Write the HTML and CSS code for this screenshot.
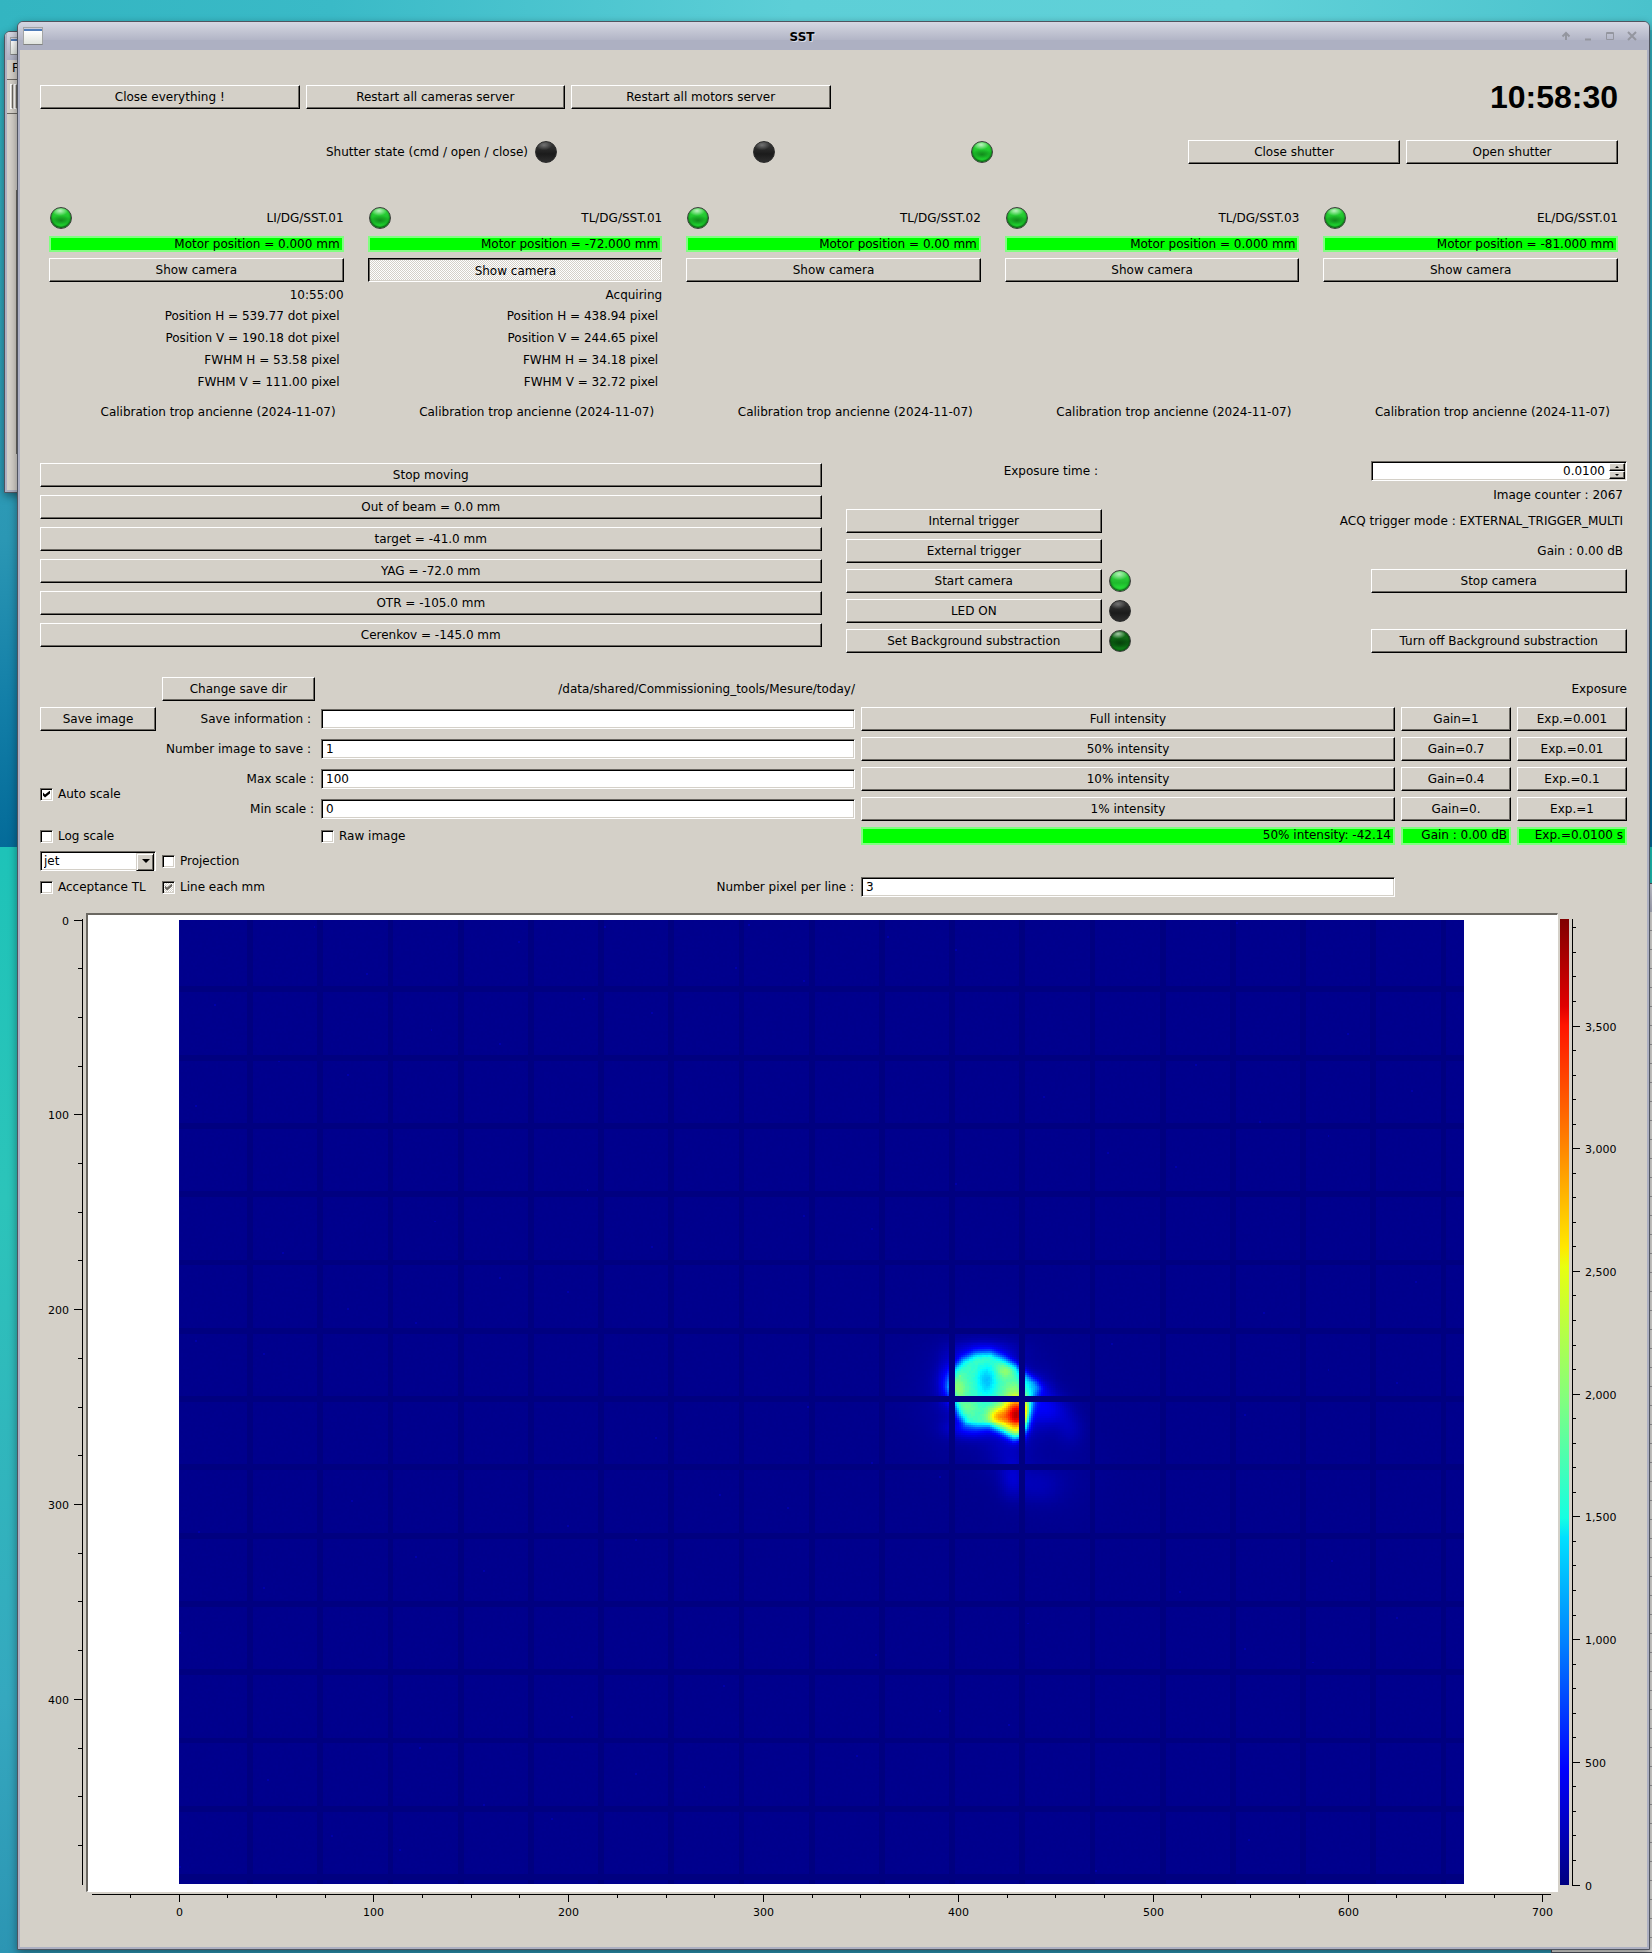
FILE: index.html
```html
<!DOCTYPE html>
<html lang="en">
<head>
<meta charset="utf-8">
<meta name="viewport" content="width=device-width, initial-scale=1">
<title>SST</title>
<link rel="stylesheet" href="styles.css">
</head>
<body>
<div class="back-window back-window-left" aria-hidden="true">
  <div class="back-title"><span class="window-icon"></span></div>
  <div class="back-menu">File</div>
  <div class="back-toolbar"><span class="grip"></span><span class="grip"></span></div>
  <div class="back-pane"></div>
</div>
<div class="back-window back-window-right" aria-hidden="true">
  <div class="back-title"></div>
  <div class="back-lines"></div>
</div>

<div class="window">
  <header class="titlebar">
    <span class="window-icon"></span>
    <h1 class="title">SST</h1>
    <div class="title-buttons">
      <button class="title-button" aria-label="Shade"><svg width="10" height="10" viewBox="0 0 10 10"><path d="M5 9V3M1.500 5.500L5 2L8.500 5.500" /></svg></button>
      <button class="title-button" aria-label="Minimize"><svg width="10" height="10" viewBox="0 0 10 10"><path d="M2 8.500H8" /></svg></button>
      <button class="title-button" aria-label="Maximize"><svg width="10" height="10" viewBox="0 0 10 10"><path class="thin" d="M1.500 1.500H8.500V8.500H1.500ZM1.500 2.500H8.500" /></svg></button>
      <button class="title-button" aria-label="Close"><svg width="10" height="10" viewBox="0 0 10 10"><path d="M1 1L9 9M9 1L1 9" /></svg></button>
    </div>
  </header>

  <main class="content">
    <section class="servers">
      <button class="btn">Close everything !</button>
      <button class="btn">Restart all cameras server</button>
      <button class="btn">Restart all motors server</button>
      <time class="clock">10:58:30</time>
    </section>

    <section class="shutter">
      <span class="shutter-label">Shutter state (cmd / open / close)</span>
      <span class="led led-off" role="img" aria-label="off"></span>
      <span class="led led-off" role="img" aria-label="off"></span>
      <span class="led led-on" role="img" aria-label="on"></span>
      <button class="btn">Close shutter</button>
      <button class="btn">Open shutter</button>
    </section>

    <section class="cameras">
      <article class="camera">
        <div class="camera-head"><span class="led led-on" role="img" aria-label="on"></span><span>LI/DG/SST.01</span></div>
        <div class="status-bar">Motor position = 0.000 mm</div>
        <button class="btn">Show camera</button>
        <p class="camera-state">10:55:00</p>
        <ul class="measures">
          <li>Position H = 539.77 dot pixel</li>
          <li>Position V = 190.18 dot pixel</li>
          <li>FWHM H = 53.58 pixel</li>
          <li>FWHM V = 111.00 pixel</li>
        </ul>
        <p class="calibration">Calibration trop ancienne (2024-11-07)</p>
      </article>
      <article class="camera">
        <div class="camera-head"><span class="led led-on" role="img" aria-label="on"></span><span>TL/DG/SST.01</span></div>
        <div class="status-bar">Motor position = -72.000 mm</div>
        <button class="btn btn-pressed" aria-pressed="true">Show camera</button>
        <p class="camera-state">Acquiring</p>
        <ul class="measures">
          <li>Position H = 438.94 pixel</li>
          <li>Position V = 244.65 pixel</li>
          <li>FWHM H = 34.18 pixel</li>
          <li>FWHM V = 32.72 pixel</li>
        </ul>
        <p class="calibration">Calibration trop ancienne (2024-11-07)</p>
      </article>
      <article class="camera">
        <div class="camera-head"><span class="led led-on" role="img" aria-label="on"></span><span>TL/DG/SST.02</span></div>
        <div class="status-bar">Motor position = 0.00 mm</div>
        <button class="btn">Show camera</button>
        <p class="calibration">Calibration trop ancienne (2024-11-07)</p>
      </article>
      <article class="camera">
        <div class="camera-head"><span class="led led-on" role="img" aria-label="on"></span><span>TL/DG/SST.03</span></div>
        <div class="status-bar">Motor position = 0.000 mm</div>
        <button class="btn">Show camera</button>
        <p class="calibration">Calibration trop ancienne (2024-11-07)</p>
      </article>
      <article class="camera">
        <div class="camera-head"><span class="led led-on" role="img" aria-label="on"></span><span>EL/DG/SST.01</span></div>
        <div class="status-bar">Motor position = -81.000 mm</div>
        <button class="btn">Show camera</button>
        <p class="calibration">Calibration trop ancienne (2024-11-07)</p>
      </article>
    </section>

    <section class="controls">
      <div class="positions">
        <button class="btn">Stop moving</button>
        <button class="btn">Out of beam = 0.0 mm</button>
        <button class="btn">target = -41.0 mm</button>
        <button class="btn">YAG = -72.0 mm</button>
        <button class="btn">OTR = -105.0 mm</button>
        <button class="btn">Cerenkov = -145.0 mm</button>
      </div>
      <div class="acquisition">
        <label class="field-label" for="exposure">Exposure time :</label>
        <div class="spin col-right">
          <input class="spin-input" id="exposure" type="number" step="0.0001" value="0.0100">
          <button class="spin-button spin-up" aria-label="Increase"></button>
          <button class="spin-button spin-down" aria-label="Decrease"></button>
        </div>
        <span class="readout col-right">Image counter : 2067</span>
        <button class="btn col-left">Internal trigger</button>
        <span class="readout col-wide">ACQ trigger mode : EXTERNAL_TRIGGER_MULTI</span>
        <button class="btn col-left">External trigger</button>
        <span class="readout col-right">Gain : 0.00 dB</span>
        <button class="btn col-left">Start camera</button>
        <span class="led led-bright" role="img" aria-label="on"></span>
        <button class="btn">Stop camera</button>
        <button class="btn col-left">LED ON</button>
        <span class="led led-off" role="img" aria-label="off"></span>
        <button class="btn col-left">Set Background substraction</button>
        <span class="led led-dim" role="img" aria-label="off"></span>
        <button class="btn">Turn off Background substraction</button>
      </div>
    </section>

    <section class="settings">
      <button class="btn c2">Change save dir</button>
      <span class="path c3">/data/shared/Commissioning_tools/Mesure/today/</span>
      <span class="path c6">Exposure</span>

      <button class="btn c1">Save image</button>
      <label class="field-label c2" for="info">Save information :</label>
      <input class="text-input c3" id="info" type="text">
      <button class="btn">Full intensity</button>
      <button class="btn">Gain=1</button>
      <button class="btn">Exp.=0.001</button>

      <label class="field-label c2" for="number">Number image to save :</label>
      <input class="text-input c3" id="number" type="text" value="1">
      <button class="btn">50% intensity</button>
      <button class="btn">Gain=0.7</button>
      <button class="btn">Exp.=0.01</button>

      <label class="check auto-scale"><input type="checkbox" checked>Auto scale</label>
      <label class="scale-label c2" for="max">Max scale :</label>
      <input class="text-input c3" id="max" type="text" value="100">
      <button class="btn">10% intensity</button>
      <button class="btn">Gain=0.4</button>
      <button class="btn">Exp.=0.1</button>

      <label class="scale-label c2" for="min">Min scale :</label>
      <input class="text-input c3" id="min" type="text" value="0">
      <button class="btn">1% intensity</button>
      <button class="btn">Gain=0.</button>
      <button class="btn">Exp.=1</button>

      <label class="check c1"><input type="checkbox">Log scale</label>
      <label class="check c3"><input type="checkbox">Raw image</label>
      <div class="status-bar status-tall">50% intensity: -42.14</div>
      <div class="status-bar status-tall">Gain : 0.00 dB</div>
      <div class="status-bar status-tall">Exp.=0.0100 s</div>

      <div class="combo c1">
        <select class="combo-select" aria-label="Colour map"><option>jet</option></select>
      </div>
      <label class="check c2"><input type="checkbox">Projection</label>

      <label class="check c1"><input type="checkbox">Acceptance TL</label>
      <label class="check c2"><input class="partial" type="checkbox" checked>Line each mm</label>
      <label class="scale-label c3" for="line">Number pixel per line :</label>
      <input class="text-input" id="line" type="text" value="3">
    </section>

    <section class="plot">
      <svg class="axis axis-y" id="axis-y"></svg>
      <div class="frame" id="frame"><canvas class="image" id="image" width="659" height="494"></canvas></div>
      <div class="colorbar" id="colorbar"></div>
      <svg class="axis axis-z" id="axis-z"></svg>
      <svg class="axis axis-x" id="axis-x"></svg>
    </section>
  </main>
</div>
<script src="plot.js"></script>
</body>
</html>
```
FILE: styles.css
```css
:root {
  --face: #d4d0c8;
  --shade: #6b6862;
  --frame: #adb0c2;
}

* {
  box-sizing: border-box;
}

body {
  margin: 0;
  padding: 21px 2px 3px 17px;
  position: relative;
  overflow-x: hidden;
  font: 12px/16px "DejaVu Sans", sans-serif;
  color: #000;
  background:
    linear-gradient(90deg, #33b5c1, #3abac7 20%, #5dcfd7 48%, #60d1d8 75%, #4ac2cc) 0 0 / 100% 30px no-repeat,
    linear-gradient(#33b5c1, #2e9db7 420px, #2b97b4 540px, #137fa8 700px, #046b99 847px, #1ec3b8 847px, #2cc4ba 1200px, #35a8bf 1700px, #2c95b3 1953px);
}

p, ul, h1 {
  margin: 0;
  padding: 0;
  font-size: inherit;
}

ul {
  list-style: none;
}

button, input, select {
  font: inherit;
  color: inherit;
  margin: 0;
  min-width: 0;
}

/* Windows */

.window {
  position: relative;
  border: 1px solid #50545f;
  border-radius: 6px 6px 0 0;
  background: var(--frame);
  padding: 0 2px 2px;
  box-shadow: 0 3px 8px rgba(0, 0, 0, 0.4);
}

.titlebar {
  display: flex;
  align-items: center;
  height: 28px;
  margin: 0 -2px;
  padding: 0 12px 0 5px;
  border-radius: 5px 5px 0 0;
  background: linear-gradient(#d5d7e2, #b2b5c6 18px, var(--frame) 18px);
}

.window-icon {
  width: 20px;
  height: 18px;
  border: 1px solid #a2a4a4;
  border-bottom: 1px solid #808282;
  background: linear-gradient(#fff0 1px, #4f7cb8 1px, #4f7cb8 3px, #fff 3px, #dfe3dd);
}

.title {
  flex: 1;
  padding-top: 2px;
  text-align: center;
  font-weight: bold;
  text-shadow: 1px 1px #d9dce6;
}

.title-buttons {
  display: flex;
  gap: 12px;
}

.title-button {
  width: 10px;
  height: 10px;
  padding: 0;
  border: 0;
  background: none;
}

.title-button svg {
  display: block;
  fill: none;
  stroke: #94969f;
  stroke-width: 2;
}

.title-button .thin {
  stroke-width: 1;
}

.back-window {
  position: absolute;
  overflow: hidden;
  border: 1px solid #50545f;
  background: var(--face);
}

.back-window-left {
  left: 4px;
  top: 31px;
  width: 60px;
  height: 462px;
  border-radius: 6px 0 0 0;
  box-shadow: 0 3px 8px rgba(0, 0, 0, 0.4);
}

.back-window-left::after {
  content: "";
  position: absolute;
  inset: 0;
  border: solid var(--frame);
  border-width: 0 0 2px 2px;
}

.back-window-right {
  right: 0;
  top: 883px;
  bottom: 0;
  width: 101px;
  border-right: 0;
}

.back-title {
  height: 28px;
  padding: 5px;
  background: linear-gradient(#d5d7e2, var(--frame));
}

.back-title .window-icon {
  display: block;
}

.back-menu {
  height: 20px;
  padding-left: 7px;
  border-bottom: 1px solid var(--shade);
}

.back-toolbar {
  display: flex;
  gap: 1px;
  height: 34px;
  padding: 4px 0 4px 5px;
  border-bottom: 1px solid var(--shade);
}

.grip {
  width: 3px;
  border: 1px solid #fff;
  border-right-color: var(--shade);
}

.back-pane {
  height: 264px;
  margin: 76px 0 0 11px;
  border-left: 1px solid var(--shade);
}

.back-lines {
  height: 100%;
  background: repeating-linear-gradient(#dddcda 0, #dddcda 18px, #97979a 18px, #97979a 19px);
}

.content {
  padding: 28px 20px 27px;
  background: var(--face);
}

/* Controls */

.btn {
  height: 24px;
  padding: 0;
  border: 1px solid;
  border-color: #fff #000 #000 #fff;
  border-radius: 0;
  background: var(--face);
  box-shadow: inset -1px -1px var(--shade);
  white-space: nowrap;
}

.btn-pressed {
  padding: 1px 0 0 1px;
  border-color: #000 #fff #fff #000;
  background: repeating-conic-gradient(#fff 0 25%, var(--face) 0 50%) 0 0 / 2px 2px;
  box-shadow: inset 1px 1px var(--shade), inset -1px -1px var(--face);
}

.text-input, .spin, .combo {
  width: 100%;
  height: 20px;
  border: 1px solid;
  border-color: var(--shade) #fff #fff var(--shade);
  border-radius: 0;
  background: #fff;
  box-shadow: inset 1px 1px #000, inset -1px -1px var(--face);
}

.text-input {
  padding: 0 4px;
  outline: 0;
}

.spin {
  display: grid;
  grid-template: 1fr 1fr / 1fr 16px;
  padding: 1px;
}

.spin-input {
  grid-row: 1 / 3;
  width: 100%;
  padding: 0 4px 0 0;
  border: 0;
  outline: 0;
  background: none;
  text-align: right;
  appearance: textfield;
}

.spin-input::-webkit-inner-spin-button {
  appearance: none;
  margin: 0;
}

.spin-button {
  display: grid;
  place-items: center;
  padding: 0;
  border: 1px solid;
  border-color: #fff #000 #000 #fff;
  border-radius: 0;
  background: var(--face);
  box-shadow: inset -1px -1px var(--shade);
}

.spin-button::before {
  content: "";
  border: solid transparent;
  border-width: 0 2px 2px;
  border-bottom-color: #000;
}

.spin-down::before {
  transform: rotate(180deg);
}

.combo {
  position: relative;
}

.combo-select {
  width: 100%;
  height: 18px;
  padding: 0 18px 0 3px;
  border: 0;
  outline: 0;
  background: none;
  appearance: none;
}

.combo::before {
  content: "";
  position: absolute;
  top: 1px;
  right: 1px;
  width: 16px;
  height: 16px;
  border: 1px solid;
  border-color: var(--face) #000 #000 var(--face);
  background: var(--face);
  box-shadow: inset 1px 1px #fff, inset -1px -1px var(--shade);
  pointer-events: none;
}

.combo::after {
  content: "";
  position: absolute;
  top: 7px;
  right: 5px;
  border: solid transparent;
  border-width: 4px 4px 0;
  border-top-color: #000;
  pointer-events: none;
}

.check {
  display: flex;
  align-items: center;
  gap: 5px;
  white-space: nowrap;
}

.check input {
  display: grid;
  place-items: center;
  flex: none;
  width: 13px;
  height: 13px;
  border: 1px solid;
  border-color: var(--shade) #fff #fff var(--shade);
  background: #fff;
  box-shadow: inset 1px 1px #000, inset -1px -1px var(--face);
  appearance: none;
}

.check input:checked::before {
  content: "";
  width: 7px;
  height: 7px;
  background: #000;
  clip-path: polygon(0 2px, 2px 4px, 7px 0, 7px 3px, 2px 7px, 0 5px);
}

.check .partial {
  background: repeating-conic-gradient(#fff 0 25%, var(--face) 0 50%) 0 0 / 2px 2px;
}

.check .partial:checked::before {
  background: var(--shade);
}

.led {
  width: 22px;
  height: 22px;
  border-radius: 50%;
  border: 1px solid #3a3f3a;
}

.led-on {
  background:
    radial-gradient(ellipse 8px 5px at 45% 14%, #ffffffb0, #fff0),
    radial-gradient(ellipse 10px 5px at 50% 62%, #128a1c, #128a1c00),
    linear-gradient(#35dc40, #1cc02a 55%, #22e634);
  box-shadow: inset 0 -1px 2px #063d0a;
}

.led-bright {
  background:
    radial-gradient(ellipse 9px 6px at 45% 16%, #ffffffa0, #fff0),
    linear-gradient(#3ce04a, #1eba2c 60%, #2cf440);
  box-shadow: inset 0 -1px 2px #063d0a;
}

.led-dim {
  background:
    radial-gradient(ellipse 8px 5px at 40% 14%, #ffffffa0, #fff0),
    radial-gradient(ellipse 10px 5px at 50% 60%, #04420a, #04420a00),
    linear-gradient(#157a1c, #0b5c12 55%, #0e8418);
  box-shadow: inset 0 0 2px #021c04;
}

.led-off {
  border-color: #2c2c2c;
  background:
    radial-gradient(ellipse 8px 5px at 40% 16%, #ffffff50, #fff0),
    linear-gradient(#3c3c3c, #1b1b1b 60%, #2e2e2e);
}

.status-bar {
  height: 16px;
  padding: 0 2px;
  border: 2px solid #80ff80;
  background: #0f0;
  line-height: 13px;
  text-align: right;
  white-space: nowrap;
}

.status-tall {
  height: 18px;
}

.field-label, .readout {
  padding-right: 4px;
  text-align: right;
  white-space: nowrap;
}

.scale-label {
  padding-right: 1px;
  text-align: right;
  white-space: nowrap;
}

.path {
  text-align: right;
}

/* Sections */

.servers {
  display: grid;
  grid-template-columns: repeat(3, 173fr) 521fr;
  align-items: center;
  gap: 6px;
  height: 38px;
  margin-right: 9px;
}

.clock {
  font: bold 32px/36px "Liberation Sans", sans-serif;
  text-align: right;
}

.shutter {
  display: grid;
  grid-template-columns: 488fr repeat(5, 212fr);
  align-items: center;
  gap: 6px;
  margin: 24px 9px 0 0;
}

.shutter .led, .acquisition .led {
  margin-left: 1px;
}

.shutter-label {
  text-align: right;
}

.cameras {
  display: grid;
  grid-template-columns: repeat(5, 1fr);
  gap: 24px;
  margin: 43px 9px 0;
}

.camera {
  display: flex;
  flex-direction: column;
  gap: 6px;
}

.camera-head {
  display: flex;
  justify-content: space-between;
  align-items: center;
  padding: 0 0 1px 1px;
}

.camera-state {
  line-height: 14px;
  text-align: right;
}

.measures {
  display: grid;
  gap: 6px;
  padding-right: 4px;
  text-align: right;
}

.calibration {
  margin-top: auto;
  padding: 8px 8px 0 0;
  text-align: right;
}

.controls {
  display: grid;
  grid-template-columns: 1fr 1fr;
  gap: 24px;
  margin-top: 41px;
}

.positions {
  display: flex;
  flex-direction: column;
  gap: 8px;
  padding-top: 2px;
}

.acquisition {
  display: grid;
  grid-template-columns: repeat(3, 1fr);
  align-items: center;
  gap: 6px;
}

.col-left {
  grid-column: 1;
}

.col-right {
  grid-column: 3;
}

.col-wide {
  grid-column: 2 / 4;
}

.acquisition .btn:not(.col-left) {
  grid-column: 3;
}

.settings {
  display: grid;
  grid-template-columns: 116px 153px 1fr 1fr 110px 110px;
  align-items: center;
  gap: 6px;
  margin-top: 24px;
}

.c1 {
  grid-column: 1;
}

.c2 {
  grid-column: 2;
}

.c3 {
  grid-column: 3;
}

.c6 {
  grid-column: 6;
}

.auto-scale {
  grid-column: 1;
  grid-row: 4 / 6;
}

/* Plot */

.plot {
  display: grid;
  grid-template-columns: 46px 1fr 9px 60px;
  margin-top: 16px;
}

.frame {
  padding: 5px 93px 7px 91px;
  border: solid;
  border-width: 2px 1px 1px 2px;
  border-color: var(--shade) #fff #fff var(--shade);
  background: #fff;
}

.image {
  display: block;
  width: 100%;
  aspect-ratio: 1285 / 964;
  image-rendering: pixelated;
}

.colorbar {
  margin: 6px -2px 7px 2px;
  background: linear-gradient(0deg, #000080, #0000ff 12%, #0080ff 25%, #00e0ff 36%, #15ffe2 38%, #80ff80 50%, #e8ff10 64%, #ffe800 66%, #ff8000 77%, #ff1400 89%, #e00000 91%, #800000);
}

.axis {
  width: 100%;
  height: 100%;
  overflow: visible;
  font-size: 11px;
  shape-rendering: crispEdges;
}

.axis-x {
  grid-column: 2;
  height: 28px;
}

.axis path {
  fill: none;
  stroke: #000;
}
```
FILE: plot.js
```js
const image = document.getElementById("image");
const frame = document.getElementById("frame");

function jet(v) {
  const c = (n) => Math.round(255 * Math.min(1, Math.max(0, 1.5 - Math.abs(4 * v - n))));
  return [c(3), c(2), c(1)];
}

// Outline of the beam spot, in sixths of a camera pixel from (359.5, 194.9).
const outline = [[219, 300], [209, 262], [214, 235], [224, 205], [248, 178], [285, 163], [330, 160],
  [370, 174], [410, 196], [440, 222], [468, 242], [478, 264], [460, 295], [449, 340],
  [440, 385], [425, 412], [400, 416], [364, 396], [328, 378], [290, 376], [258, 370],
  [236, 345]];

// Centre, spread and height of each bump inside the spot.
const inside = [[320, 242, 19, 32, -0.12], [375, 210, 18, 16, 0.1], [238, 275, 15, 22, 0.05],
  [262, 322, 22, 16, 0.05], [400, 262, 25, 22, 0.05], [410, 342, 28, 34, 0.52],
  [352, 348, 20, 18, 0.22], [472, 258, 26, 40, -0.14]];

const halo = [[300, 280, 110, 110, 0.04], [210, 245, 26, 42, 0.1], [310, 155, 60, 22, 0.08], [270, 385, 45, 20, 0.1],
  [385, 440, 45, 60, 0.035], [395, 535, 24, 40, 0.045], [470, 555, 50, 35, 0.03],
  [480, 310, 32, 50, 0.08], [530, 330, 32, 32, 0.05], [570, 385, 28, 35, 0.035], [520, 520, 90, 90, 0.012]];

function bumps(list, x, y) {
  let sum = 0;
  for (const [cx, cy, sx, sy, h] of list) {
    sum += h * Math.exp(-((x - cx) ** 2) / (2 * sx * sx) - ((y - cy) ** 2) / (2 * sy * sy));
  }
  return sum;
}

function edgeDistance(x, y) {
  let inner = false;
  let best = Infinity;
  for (let i = 0, j = outline.length - 1; i < outline.length; j = i++) {
    const [x1, y1] = outline[i];
    const [x2, y2] = outline[j];
    if ((y1 > y) !== (y2 > y) && x < ((x2 - x1) * (y - y1)) / (y2 - y1) + x1) inner = !inner;
    const dx = x2 - x1;
    const dy = y2 - y1;
    const t = Math.min(1, Math.max(0, ((x - x1) * dx + (y - y1) * dy) / (dx * dx + dy * dy)));
    best = Math.min(best, Math.hypot(x - x1 - t * dx, y - y1 - t * dy));
  }
  return inner ? best : -best;
}

function drawImage() {
  const { width, height } = image;
  const ctx = image.getContext("2d");
  const data = ctx.createImageData(width, height);
  let seed = 7;
  for (let y = 0; y < height; y++) {
    for (let x = 0; x < width; x++) {
      seed = (seed * 1103515245 + 12345) % 2147483648;
      const noise = seed / 2147483648;
      let v = 0.012 + (noise > 0.9997 ? 0.03 : noise * 0.002);
      const px = 5.846 * (x + 0.5) - 2101.5;
      const py = 5.846 * (y + 0.5) - 1139;
      if (px > -200 && px < 900 && py > -200 && py < 900) {
        v += bumps(halo, px, py);
        const d = edgeDistance(px, py);
        if (d > -60) v += (0.38 + bumps(inside, px, py)) / (1 + Math.exp(-d / 7)) + (noise - 0.5) * 0.012 * (d > 0);
      }
      const onColumn = x > 2 && (x + 1) % 36 < 3;
      const onRow = y > 2 && (y + 1) % 35 < 3;
      if (onColumn || onRow) v = 0;
      const [r, g, b] = jet(Math.min(v, 0.99));
      data.data.set([r, g, b, 255], 4 * (y * width + x));
    }
  }
  ctx.putImageData(data, 0, 0);
}

function label(x, y, anchor, text) {
  return `<text x="${x}" y="${y}" text-anchor="${anchor}">${text}</text>`;
}

function drawAxes() {
  const box = frame.getBoundingClientRect();
  const pic = image.getBoundingClientRect();
  const left = pic.left - box.left;
  const top = pic.top - box.top;
  const unit = pic.width / 659.5;
  const snap = (n) => Math.floor(n) + 0.5;

  let path = `M6 2.5H${Math.round(box.width) - 7}`;
  let text = "";
  for (let n = -25; n <= 700; n += 25) {
    const x = snap(left + n * unit);
    const major = n % 100 === 0;
    path += `M${x} 2V${major ? 10 : 6}`;
    if (major) text += label(x, 24, "middle", n);
  }
  document.getElementById("axis-x").innerHTML = `<path d="${path}"/>${text}`;

  path = `M42.5 ${top - 1}V${top + pic.height + 1}`;
  text = "";
  for (let n = 0; n < 494; n += 25) {
    const y = snap(top + n * unit);
    const major = n % 100 === 0;
    path += `M${major ? 34 : 38} ${y}H42`;
    if (major) text += label(29, y + 4, "end", n);
  }
  document.getElementById("axis-y").innerHTML = `<path d="${path}"/>${text}`;

  const zero = top + pic.height + 1;
  const perCount = (pic.height + 2) / 3936;
  path = `M5.5 ${top - 1}V${zero + 1}`;
  text = "";
  for (let n = 0; n <= 3900; n += 100) {
    const y = snap(zero - n * perCount);
    const major = n % 500 === 0;
    path += `M5 ${y}H${major ? 13 : 9}`;
    if (major) text += label(18, y + 4, "start", n.toLocaleString("en-US"));
  }
  document.getElementById("axis-z").innerHTML = `<path d="${path}"/>${text}`;
}

drawImage();
drawAxes();
window.addEventListener("resize", drawAxes);
```
